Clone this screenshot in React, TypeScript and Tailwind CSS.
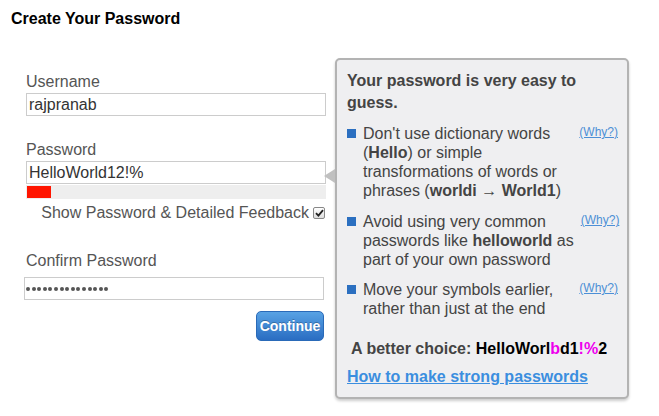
import React from "react";

const Bullet = () => (
  <span className="mt-[5px] h-[9px] w-[9px] shrink-0 bg-[#2b6fc0]" />
);

const Why = () => (
  <span className="ml-auto mt-[-1px] shrink-0 text-[12px] leading-[18px] text-[#4d8fd6] underline">
    (Why?)
  </span>
);

export default function App() {
  return (
    <div
      className="relative h-[416px] w-[659px] overflow-hidden bg-white text-[#333]"
      style={{ fontFamily: '"Liberation Sans", Arial, sans-serif' }}
    >
      <div className="pl-[11px] pt-[10px] text-[16px] font-bold leading-[18px] text-black">
        Create Your Password
      </div>
      <div className="flex">
        {/* left column */}
        <div className="ml-[26px] mt-[45px] flex w-[300px] flex-col">
          <div className="text-[16px] leading-[18px] text-[#555]">Username</div>
          <div className="mt-[2px] flex h-[23px] items-center border border-[#ccc] pl-[2px] text-[16px] text-[#333]">
            rajpranab
          </div>
          <div className="mt-[25px] text-[16px] leading-[18px] text-[#555]">Password</div>
          <div className="mt-[2px] flex h-[23px] items-center border border-[#ccc] pl-[2px] text-[16px] text-[#333]">
            HelloWorld12!%
          </div>
          <div className="mt-[1px] h-[14px] bg-[#eee] p-[1px]">
            <div className="h-[12px] w-[24px] bg-[#ff1500]" />
          </div>
          <div className="mt-[5px] flex h-[18px] items-center justify-end gap-[4px] pr-[1px]">
            <span className="text-[16px] leading-[18px] text-[#555]">
              Show Password &amp; Detailed Feedback
            </span>
            <span className="flex h-[12px] w-[12px] items-center justify-center rounded-[2px] border border-[#888] bg-gradient-to-b from-white to-[#ddd]">
              <svg width="9" height="8" viewBox="0 0 9 8">
                <path d="M1 4.2 L3.4 6.6 L8 1.2" stroke="#222" strokeWidth="1.8" fill="none" />
              </svg>
            </span>
          </div>
          <div className="mt-[30px] text-[16px] leading-[18px] text-[#555]">Confirm Password</div>
          <div className="ml-[-2px] mt-[7px] flex h-[23px] w-[300px] items-center border border-[#ccc] pl-[1px]">
            {Array.from({ length: 15 }).map((_, i) => (
              <span key={i} className="mr-[1.6px] h-[4px] w-[4px] rounded-full bg-[#555]" />
            ))}
          </div>
          <div className="mt-[11px] flex justify-end pr-[2px]">
            <div className="flex h-[30px] w-[68px] items-center justify-center rounded-[5px] border border-[#2a6ab8] bg-gradient-to-b from-[#58a2e4] to-[#2a6dc2] text-[14px] font-bold text-white [text-shadow:0_-1px_0_rgba(0,0,0,0.25)]">
              Continue
            </div>
          </div>
        </div>

        {/* feedback panel */}
        <div className="relative ml-[9px] mt-[30px] h-[341px] w-[294px] rounded-[5px] border-2 border-[#b3b3b3] bg-[#efeff1] pl-[10px] pr-[9px] pt-[10px] text-[#444] shadow-[0_2px_3px_rgba(0,0,0,0.2)]">
          <span className="absolute left-[-13px] top-[109px] h-0 w-0 border-y-[7px] border-r-[11px] border-y-transparent border-r-[#c0c0c0]" />
          <div className="text-[16px] font-bold leading-[22px]">
            <div>Your password is very easy to</div>
            <div>guess.</div>
          </div>
          <div className="mt-[10px] flex gap-[7px] text-[16px] leading-[19px]">
            <Bullet />
            <div className="whitespace-nowrap">
              <div>Don't use dictionary words</div>
              <div>
                (<b>Hello</b>) or simple
              </div>
              <div>transformations of words or</div>
              <div>
                phrases (<b>worldi → World1</b>)
              </div>
            </div>
            <Why />
          </div>
          <div className="mt-[12px] flex gap-[7px] text-[16px] leading-[19px]">
            <Bullet />
            <div className="whitespace-nowrap">
              <div>Avoid using very common</div>
              <div>
                passwords like <b>helloworld</b> as
              </div>
              <div>part of your own password</div>
            </div>
            <Why />
          </div>
          <div className="mt-[11px] flex gap-[7px] text-[16px] leading-[19px]">
            <Bullet />
            <div className="whitespace-nowrap">
              <div>Move your symbols earlier,</div>
              <div>rather than just at the end</div>
            </div>
            <Why />
          </div>
          <div className="mt-[21px] pl-[4px] text-[16px] font-bold leading-[19px]">
            A better choice:{" "}
            <span className="text-black">
              HelloWorl<span className="text-[#ee00ee]">b</span>d1
              <span className="text-[#ee00ee]">!%</span>2
            </span>
          </div>
          <div className="mt-[9px] text-[16px] font-bold leading-[19px] text-[#3b8edf] underline">
            How to make strong passwords
          </div>
        </div>
      </div>
    </div>
  );
}
